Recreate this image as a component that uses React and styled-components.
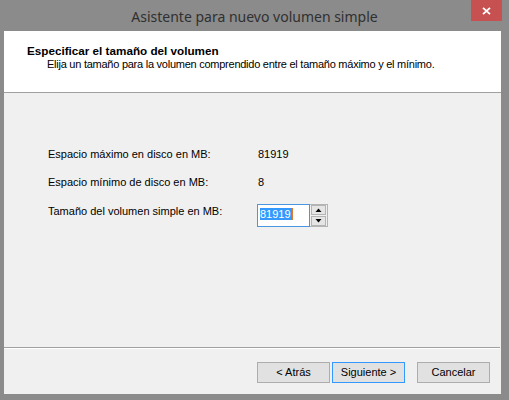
import React from "react";
import styled, { createGlobalStyle } from "styled-components";

const Global = createGlobalStyle`
  html, body { margin: 0; padding: 0; background: #8b8b8b; }
  body { font-family: "Liberation Sans", Arial, sans-serif; }
`;

const Window = styled.div`
  width: 509px;
  height: 400px;
  background: #8b8b8b;
  display: flex;
  flex-direction: column;
  overflow: hidden;
`;

const TitleBar = styled.div`
  height: 31px;
  flex: none;
  display: grid;
  grid-template-columns: 1fr auto 1fr;
  align-items: start;
`;

const Title = styled.div`
  grid-column: 2;
  font-family: "Noto Sans", "Open Sans", sans-serif;
  font-size: 14px;
  line-height: 20px;
  padding-top: 7px;
  color: #303030;
  white-space: nowrap;
`;

const CloseButton = styled.div`
  grid-column: 3;
  justify-self: end;
  margin-right: 7px;
  width: 31px;
  height: 21px;
  background: #c75050;
  display: flex;
  align-items: center;
  justify-content: center;
`;

const Client = styled.div`
  flex: 1;
  margin: 0 8px 6px 4px;
  background: #f0f0f0;
  display: flex;
  flex-direction: column;
`;

const Header = styled.div`
  flex: none;
  background: #ffffff;
  border-bottom: 1px solid #a0a0a0;
  box-sizing: border-box;
  height: 62px;
  padding: 12px 0 0 23px;
`;

const HeaderTitle = styled.div`
  font-weight: bold;
  font-size: 11.7px;
  line-height: 15px;
  color: #000;
`;

const HeaderSub = styled.div`
  font-size: 11px;
  line-height: 13px;
  letter-spacing: -0.25px;
  color: #000;
  padding-left: 20px;
`;

const Body = styled.div`
  flex: 1;
  padding: 55px 0 0 44px;
  display: flex;
  flex-direction: column;
`;

const Row = styled.div`
  display: flex;
  align-items: flex-start;
  height: ${(p) => p.$h}px;
  font-size: 11px;
  line-height: 13px;
  color: #000;
`;

const Label = styled.div`
  width: 210px;
  padding-top: ${(p) => p.$pt || 0}px;
`;

const Value = styled.div``;

const Spin = styled.div`
  display: flex;
  height: 23px;
  margin-left: -1px;
`;

const TextBox = styled.div`
  width: 53px;
  height: 23px;
  box-sizing: border-box;
  border: 1px solid #4a97e0;
  background: #fff;
  padding: 2px 0 0 2px;
  display: flex;
  align-items: flex-start;
`;

const Selected = styled.span`
  background: #3399ff;
  color: #fff;
  font-size: 11px;
  line-height: 12px;
  padding: 0 1px 0 0;
  margin-top: 1px;
`;

const Caret = styled.span`
  width: 1px;
  height: 12px;
  margin-top: 1px;
  background: #e07a2a;
`;

const SpinButtons = styled.div`
  width: 18px;
  height: 23px;
  box-sizing: border-box;
  border: 1px solid #b4b4b4;
  border-left: none;
  display: flex;
  flex-direction: column;
  justify-content: space-between;
  padding: 0 1px 0 1px;
  background: #f0f0f0;
`;

const SpinBtn = styled.div`
  height: 10px;
  box-sizing: border-box;
  border: 1px solid #b4b4b4;
  background: #e5e5e5;
  display: flex;
  align-items: center;
  justify-content: center;
`;

const Separator = styled.div`
  height: 1px;
  background: #a0a0a0;
  border-bottom: 1px solid #ffffff;
  margin-right: 1px;
`;

const Footer = styled.div`
  height: 45px;
  flex: none;
  display: flex;
  justify-content: flex-end;
  align-items: flex-start;
  padding: 13px 11px 0 0;
  box-sizing: border-box;
`;

const Button = styled.div`
  width: 73px;
  height: 21px;
  box-sizing: border-box;
  border: 1px solid ${(p) => (p.$default ? "#3399ff" : "#adadad")};
  background: #e1e1e1;
  font-size: 11px;
  line-height: 19px;
  text-align: center;
  color: #000;
  margin-left: ${(p) => p.$gap}px;
`;

const Tri = ({ up }) => (
  <svg width="7" height="4" viewBox="0 0 7 4">
    <polygon points={up ? "0.5,4 6.5,4 3.5,0.5" : "0.5,0 6.5,0 3.5,3.5"} fill="#000" />
  </svg>
);

export default function App() {
  return (
    <>
      <Global />
      <Window>
        <TitleBar>
          <Title>Asistente para nuevo volumen simple</Title>
          <CloseButton>
            <svg width="9" height="8" viewBox="0 0 9 8">
              <path d="M1 0.8 L8 7.2 M8 0.8 L1 7.2" stroke="#fff" strokeWidth="1.8" />
            </svg>
          </CloseButton>
        </TitleBar>
        <Client>
          <Header>
            <HeaderTitle>Especificar el tamaño del volumen</HeaderTitle>
            <HeaderSub>
              Elija un tamaño para la volumen comprendido entre el tamaño máximo y el mínimo.
            </HeaderSub>
          </Header>
          <Body>
            <Row $h={28}>
              <Label>Espacio máximo en disco en MB:</Label>
              <Value>81919</Value>
            </Row>
            <Row $h={28}>
              <Label>Espacio mínimo de disco en MB:</Label>
              <Value>8</Value>
            </Row>
            <Row $h={24}>
              <Label $pt={1}>Tamaño del volumen simple en MB:</Label>
              <Spin>
                <TextBox>
                  <Selected>81919</Selected>
                  <Caret />
                </TextBox>
                <SpinButtons>
                  <SpinBtn>
                    <Tri up />
                  </SpinBtn>
                  <SpinBtn>
                    <Tri />
                  </SpinBtn>
                </SpinButtons>
              </Spin>
            </Row>
          </Body>
          <Separator />
          <Footer>
            <Button $gap={0}>&lt; Atrás</Button>
            <Button $gap={2} $default>
              Siguiente &gt;
            </Button>
            <Button $gap={12}>Cancelar</Button>
          </Footer>
        </Client>
      </Window>
    </>
  );
}
